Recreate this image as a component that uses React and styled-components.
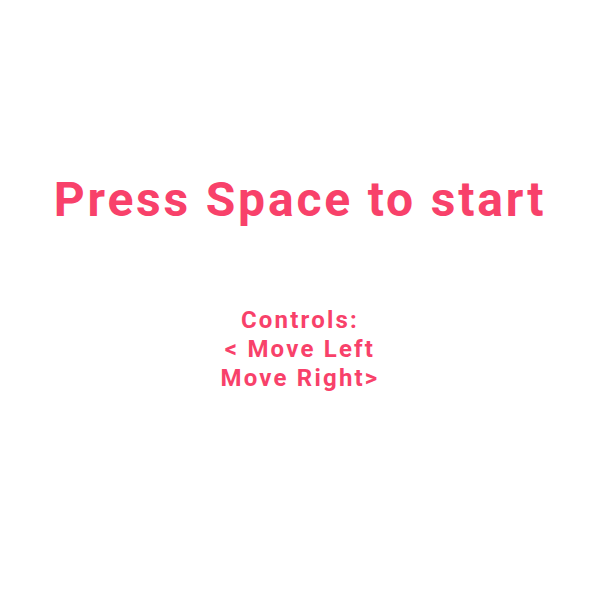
import React from 'react';
import styled, {createGlobalStyle} from 'styled-components'

const GlobalStyle = createGlobalStyle`
  html, body { margin:0; padding:0; background:#fff; }
`

const Screen = styled.div`
  width: 600px;
  height: 600px;
  display: flex;
  flex-direction: column;
  align-items: center;
  font-family: Roboto, sans-serif;
  font-weight: bold;
  color: #f8416a;
`

const Title = styled.h1`
  margin: 172px 0 0;
  font-size: 48px;
  line-height: 56px;
  letter-spacing: 2.8px;
  font-weight: bold;
`

const Controls = styled.div`
  margin-top: 78px;
  display: flex;
  flex-direction: column;
  align-items: center;
  font-size: 24px;
  line-height: 29px;
  letter-spacing: 2.2px;
`

const App = () => {
  return (
    <>
      <GlobalStyle />
      <Screen>
        <Title>Press Space to start</Title>
        <Controls>
          <span>Controls:</span>
          <span>&lt; Move Left</span>
          <span>Move Right&gt;</span>
        </Controls>
      </Screen>
    </>
  );
};

export default App;
